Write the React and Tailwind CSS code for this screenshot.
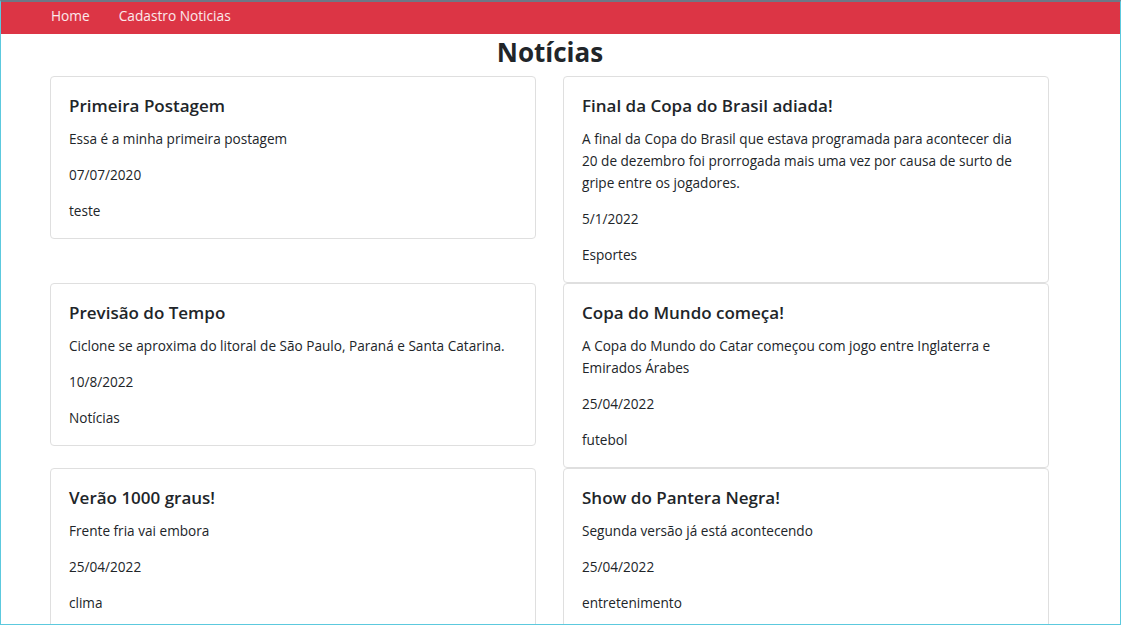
const noticias = [
  {
    titulo: "Primeira Postagem",
    texto: "Essa é a minha primeira postagem",
    data: "07/07/2020",
    categoria: "teste",
  },
  {
    titulo: "Final da Copa do Brasil adiada!",
    texto:
      "A final da Copa do Brasil que estava programada para acontecer dia 20 de dezembro foi prorrogada mais uma vez por causa de surto de gripe entre os jogadores.",
    data: "5/1/2022",
    categoria: "Esportes",
  },
  {
    titulo: "Previsão do Tempo",
    texto: "Ciclone se aproxima do litoral de São Paulo, Paraná e Santa Catarina.",
    data: "10/8/2022",
    categoria: "Notícias",
  },
  {
    titulo: "Copa do Mundo começa!",
    texto: "A Copa do Mundo do Catar começou com jogo entre Inglaterra e Emirados Árabes",
    data: "25/04/2022",
    categoria: "futebol",
  },
  {
    titulo: "Verão 1000 graus!",
    texto: "Frente fria vai embora",
    data: "25/04/2022",
    categoria: "clima",
  },
  {
    titulo: "Show do Pantera Negra!",
    texto: "Segunda versão já está acontecendo",
    data: "25/04/2022",
    categoria: "entretenimento",
  },
];

const NoticiaCard = ({ noticia }) => (
  <div className="rounded border border-[#dfdfdf] bg-white px-[18px] pt-[17px] pb-4">
    <h5 className="mb-[10px] text-[17px] font-semibold leading-[24px] text-[#212529]">
      {noticia.titulo}
    </h5>
    <p className="mb-[14px] text-[13.6px] leading-[22px]">{noticia.texto}</p>
    <p className="mb-[14px] text-[13.6px] leading-[22px]">{noticia.data}</p>
    <p className="text-[13.6px] leading-[22px]">{noticia.categoria}</p>
  </div>
);

export default function App() {
  return (
    <div
      className="h-[625px] overflow-hidden border-x border-b border-t-2 border-x-[#5cc9de] border-b-[#5cc9de] border-t-[#6d7886] bg-white text-[#212529]"
      style={{ fontFamily: '"Open Sans", "Noto Sans", sans-serif' }}
    >
      <nav className="flex h-8 items-start gap-[29px] bg-[#dc3545] pl-[50px] pt-[4px] text-[13.7px] leading-[20px] text-white/90">
        <a href="#">Home</a>
        <a href="#">Cadastro Noticias</a>
      </nav>

      <div className="ml-[49px] w-[1000px]">
        <h1 className="mb-[6px] text-center text-[26px] font-bold leading-[36px]">
          Notícias
        </h1>
        <div className="grid grid-cols-[486px_486px] items-start gap-x-[27px]">
          {noticias.map((n) => (
            <NoticiaCard key={n.titulo} noticia={n} />
          ))}
        </div>
      </div>
    </div>
  );
}
